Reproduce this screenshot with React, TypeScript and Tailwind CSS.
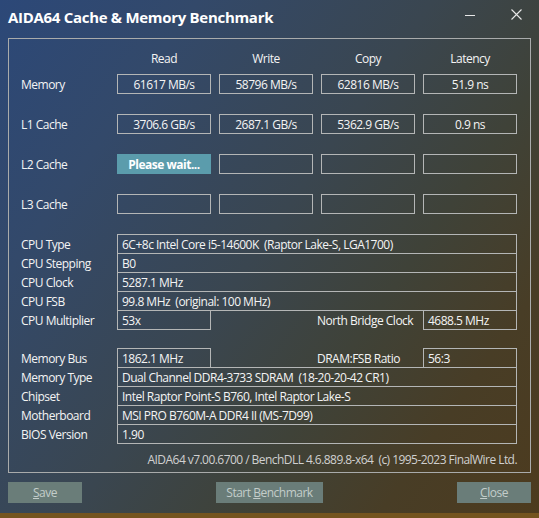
import React from "react";

const cols = ["Read", "Write", "Copy", "Latency"];

const bench: { label: string; vals: string[]; wait?: boolean }[] = [
  { label: "Memory", vals: ["61617 MB/s", "58796 MB/s", "62816 MB/s", "51.9 ns"] },
  { label: "L1 Cache", vals: ["3706.6 GB/s", "2687.1 GB/s", "5362.9 GB/s", "0.9 ns"] },
  { label: "L2 Cache", vals: ["Please wait...", "", "", ""], wait: true },
  { label: "L3 Cache", vals: ["", "", "", ""] },
];

function Box({ children, className = "" }: { children?: React.ReactNode; className?: string }) {
  return (
    <div className={`h-[20px] border border-[#b4b6b6] flex items-center whitespace-pre pt-[1px] ${className}`}>{children}</div>
  );
}

function InfoRow({ label, value }: { label: string; value: string }) {
  return (
    <div className="flex h-[19px] items-start">
      <div className="w-[96px] h-[20px] pt-[1px] flex items-center">{label}</div>
      <Box className="w-[400px] pl-[4px]">{value}</Box>
    </div>
  );
}

function SplitRow({ label, value, label2, value2 }: { label: string; value: string; label2: string; value2: string }) {
  return (
    <div className="flex h-[19px] items-start">
      <div className="w-[96px] h-[20px] pt-[1px] flex items-center">{label}</div>
      <Box className="w-[94px] pl-[4px]">{value}</Box>
      <div className="w-[106px] h-[20px]" />
      <div className="w-[106px] h-[20px] pt-[1px] flex items-center">{label2}</div>
      <Box className="w-[94px] pl-[4px]">{value2}</Box>
    </div>
  );
}

export default function App() {
  return (
    <div className="w-[539px] h-[518px] overflow-hidden flex flex-col text-[12px] leading-[16px] tracking-[-0.5px] text-[#f4f4f4] [font-family:'Open_Sans',sans-serif] bg-[linear-gradient(125deg,#2c4878_0%,#33496a_22%,#3a4650_48%,#3f4238_66%,#483d26_82%,#4d3b1e_100%)]">
      {/* title bar */}
      <div className="h-[38px] flex items-start shrink-0">
        <div className="pl-[8px] pt-[7px] text-[15px] leading-[20px] tracking-[-0.3px] font-bold text-white">
          AIDA64 Cache &amp; Memory Benchmark
        </div>
        <div className="ml-auto flex">
          <div className="w-[46px] h-[29px] flex items-center justify-center">
            <svg width="10" height="10" viewBox="0 0 10 10">
              <line x1="0" y1="5.5" x2="10" y2="5.5" stroke="#e8e8e8" strokeWidth="1" />
            </svg>
          </div>
          <div className="w-[46px] h-[29px] flex items-center justify-center">
            <svg width="11" height="11" viewBox="0 0 11 11">
              <path d="M0.5 0.5 L10.5 10.5 M10.5 0.5 L0.5 10.5" stroke="#e8e8e8" strokeWidth="1.1" fill="none" />
            </svg>
          </div>
        </div>
      </div>

      {/* group box */}
      <div className="ml-[8px] w-[523px] border border-[#a9abab] pl-[12px] pr-[13px] pt-[12px] pb-[4px] shrink-0">
        <div className="flex h-[16px]">
          <div className="w-[96px]" />
          <div className="flex gap-[8px]">
            {cols.map((c) => (
              <div key={c} className="w-[94px] text-center">
                {c}
              </div>
            ))}
          </div>
        </div>

        <div className="mt-[7px] flex flex-col gap-[20px]">
          {bench.map((r) => (
            <div key={r.label} className="flex h-[20px]">
              <div className="w-[96px] pt-[1px] flex items-center">{r.label}</div>
              <div className="flex gap-[8px]">
                {r.vals.map((v, i) =>
                  r.wait && i === 0 ? (
                    <div
                      key={i}
                      className="w-[94px] h-[20px] pt-[1px] bg-[#5b9cac] flex items-center justify-center font-bold text-white"
                    >
                      {v}
                    </div>
                  ) : (
                    <Box key={i} className="w-[94px] justify-center">
                      {v}
                    </Box>
                  )
                )}
              </div>
            </div>
          ))}
        </div>

        <div className="mt-[20px] flex flex-col">
          <InfoRow label="CPU Type" value="6C+8c Intel Core i5-14600K  (Raptor Lake-S, LGA1700)" />
          <InfoRow label="CPU Stepping" value="B0" />
          <InfoRow label="CPU Clock" value="5287.1 MHz" />
          <InfoRow label="CPU FSB" value="99.8 MHz  (original: 100 MHz)" />
          <SplitRow label="CPU Multiplier" value="53x" label2="North Bridge Clock" value2="4688.5 MHz" />
          <div className="h-[19px]" />
          <SplitRow label="Memory Bus" value="1862.1 MHz" label2="DRAM:FSB Ratio" value2="56:3" />
          <InfoRow label="Memory Type" value="Dual Channel DDR4-3733 SDRAM  (18-20-20-42 CR1)" />
          <InfoRow label="Chipset" value="Intel Raptor Point-S B760, Intel Raptor Lake-S" />
          <InfoRow label="Motherboard" value="MSI PRO B760M-A DDR4 II (MS-7D99)" />
          <InfoRow label="BIOS Version" value="1.90" />
        </div>

        <div className="mt-[9px] h-[16px] text-right text-[#d0d0d0] whitespace-pre tracking-[-0.55px]">
          AIDA64 v7.00.6700 / BenchDLL 4.6.889.8-x64  (c) 1995-2023 FinalWire Ltd.
        </div>
      </div>

      {/* buttons */}
      <div className="mt-[9px] px-[8px] flex justify-between shrink-0">
        <div className="w-[74px] h-[21px] bg-[#6a7d79] flex items-center justify-center text-[#c3cdca]">
          <span>
            <span className="underline">S</span>ave
          </span>
        </div>
        <div className="w-[107px] h-[21px] bg-[#6a7d79] flex items-center justify-center text-[#c3cdca]">
          <span>
            Start <span className="underline">B</span>enchmark
          </span>
        </div>
        <div className="w-[74px] h-[21px] bg-[#6a7d79] flex items-center justify-center text-[#c3cdca]">
          <span>
            <span className="underline">C</span>lose
          </span>
        </div>
      </div>

      <div className="flex-1" />
      <div className="h-[5px] bg-[#74541f] shrink-0" />
    </div>
  );
}
